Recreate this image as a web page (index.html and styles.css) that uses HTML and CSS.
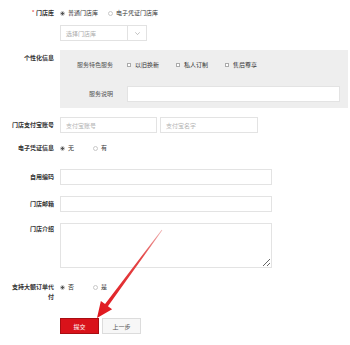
FILE: index.html
```html
<!DOCTYPE html>
<html lang="zh-CN">
<head>
<meta charset="utf-8">
<title>门店信息</title>
<link rel="stylesheet" href="styles.css">
</head>
<body>
<div class="form">
  <div class="row r1">
    <div class="label"><span class="req">*</span> 门店库</div>
    <div class="opts">
      <span class="opt"><span class="radio on"></span>普通门店库</span>
      <span class="opt"><span class="radio"></span>电子凭证门店库</span>
    </div>
  </div>
  <div class="row r2">
    <div></div>
    <div class="select">
      <span class="ph">选择门店库</span>
      <span class="caret"><svg width="5" height="3" viewBox="0 0 5 3"><polyline points="0.3,0.3 2.5,2.6 4.7,0.3" fill="none" stroke="#9a9a9a" stroke-width="0.6"/></svg></span>
    </div>
  </div>
  <div class="row r3 top">
    <div class="label lp3">个性化信息</div>
    <div class="panel">
      <div class="plabel">服务特色服务</div>
      <div class="checks">
        <span class="chk"><span class="box"></span>以旧换新</span>
        <span class="chk"><span class="box"></span>私人订制</span>
        <span class="chk"><span class="box"></span>售后尊享</span>
      </div>
      <div class="plabel">服务说明</div>
      <input class="inp full" type="text">
    </div>
  </div>
  <div class="row r4">
    <div class="label">门店支付宝账号</div>
    <div class="pair">
      <input class="inp w97" type="text" placeholder="支付宝账号">
      <input class="inp w98" type="text" placeholder="支付宝名字">
    </div>
  </div>
  <div class="row r5">
    <div class="label">电子凭证信息</div>
    <div class="opts">
      <span class="opt"><span class="radio on"></span>无</span>
      <span class="opt"><span class="radio"></span>有</span>
    </div>
  </div>
  <div class="row r6">
    <div class="label">自用编码</div>
    <div><input class="inp w212" type="text"></div>
  </div>
  <div class="row r7">
    <div class="label">门店邮箱</div>
    <div><input class="inp w212" type="text"></div>
  </div>
  <div class="row r8 top">
    <div class="label lp1">门店介绍</div>
    <div><textarea class="area"></textarea></div>
  </div>
  <div class="row r9 top">
    <div class="label">支持大额订单代付</div>
    <div class="opts">
      <span class="opt"><span class="radio on"></span>否</span>
      <span class="opt"><span class="radio"></span>是</span>
    </div>
  </div>
  <div class="row r10">
    <div></div>
    <div class="btns">
      <button class="btn primary" type="button">提交</button>
      <button class="btn sec" type="button">上一步</button>
    </div>
  </div>
</div>
<svg class="pointer" width="350" height="345" viewBox="0 0 350 345">
  <defs>
    <linearGradient id="ag" gradientUnits="userSpaceOnUse" x1="162" y1="230" x2="97" y2="318">
      <stop offset="0" stop-color="#efb4b4"/>
      <stop offset="0.3" stop-color="#e44848"/>
      <stop offset="1" stop-color="#e0141b"/>
    </linearGradient>
  </defs>
  <polygon fill="url(#ag)" points="162.3,230.2 107.95,306.21 112.13,309.30 97,318 100.87,300.98 105.05,304.07 161.7,229.8"/>
</svg>
</body>
</html>
```

FILE: styles.css
```css
* { box-sizing: border-box; }

body {
  margin: 0;
  width: 350px;
  height: 345px;
  overflow: hidden;
  position: relative;
  background: #fff;
  font-family: "Noto Sans CJK SC", "Noto Sans", sans-serif;
  font-size: 6px;
  color: #333;
}

.form {
  display: flex;
  flex-direction: column;
  padding-left: 9px;
  padding-right: 2px;
}

.row {
  display: grid;
  grid-template-columns: 45px 1fr;
  column-gap: 6px;
  align-items: center;
}

.row.top { align-items: start; }

.label {
  text-align: right;
  font-weight: bold;
  line-height: 10px;
  color: #333;
}

.lp3 { padding-top: 3px; }
.lp1 { padding-top: 1px; }

.req { color: #e4393c; font-weight: normal; }

.r1 { margin-top: 8px; height: 10px; }
.r2 { margin-top: 7px; }
.r3 { margin-top: 9px; }
.r4 { margin-top: 9px; }
.r5 { margin-top: 10px; height: 10px; }
.r6 { margin-top: 16px; }
.r7 { margin-top: 11px; }
.r8 { margin-top: 11px; }
.r9 { margin-top: 14px; }
.r10 { margin-top: 16px; }

.opts {
  display: flex;
  align-items: center;
  gap: 10px;
  line-height: 10px;
  height: 10px;
}

.opt {
  display: flex;
  align-items: center;
  gap: 3px;
  min-width: 23px;
  color: #333;
}

.radio {
  flex: none;
  width: 5px;
  height: 5px;
  border-radius: 50%;
  border: 1px solid #c8c8c8;
  background: #fff;
}

.radio.on {
  border-color: #bdbdbd;
  background: radial-gradient(circle, #555 0 1.1px, #fff 1.6px);
}

.select {
  width: 87px;
  height: 16px;
  border: 1px solid #e2e2e2;
  display: flex;
  align-items: stretch;
  background: #fff;
}

.ph {
  flex: 1;
  padding-left: 5px;
  color: #ababab;
  display: flex;
  align-items: center;
}

.caret {
  width: 19px;
  border-left: 1px solid #e2e2e2;
  display: flex;
  align-items: center;
  justify-content: center;
}

.caret svg { display: block; }

.panel {
  background: #eeeeee;
  height: 58px;
  padding: 9px 8px 6px 0;
  display: grid;
  grid-template-columns: 53px 1fr;
  grid-template-rows: 12px 16px;
  column-gap: 14px;
  row-gap: 15px;
  align-items: center;
}

.plabel {
  text-align: right;
  color: #555;
  line-height: 10px;
}

.checks {
  display: flex;
  align-items: center;
  gap: 17px;
  line-height: 10px;
}

.chk {
  display: flex;
  align-items: center;
  gap: 4px;
  color: #333;
}

.box {
  flex: none;
  width: 4px;
  height: 4px;
  border: 1px solid #aaa;
  background: #fff;
}

.inp {
  display: block;
  height: 16px;
  margin: 0;
  padding: 0 5px;
  border: 1px solid #e3e3e3;
  background: #fff;
  font: inherit;
  font-size: 6px;
  color: #333;
  outline: none;
}

.inp::placeholder { color: #b3b3b3; }

.full { width: 100%; }

.pair { display: flex; gap: 3px; }
.w97 { width: 97px; }
.w98 { width: 98px; }
.w212 { width: 212px; }

.area {
  display: block;
  width: 212px;
  height: 45px;
  margin: 0;
  padding: 3px 5px;
  border: 1px solid #e3e3e3;
  background: #fff;
  font: inherit;
  font-size: 6px;
  outline: none;
}

.btns { display: flex; gap: 3px; }

.btn {
  width: 39px;
  height: 16px;
  margin: 0;
  padding: 0;
  border: 1px solid;
  font: inherit;
  font-size: 6px;
  display: flex;
  align-items: center;
  justify-content: center;
}

.btn.primary {
  background: #d9121a;
  border-color: #a80d12;
  color: #fff;
}

.btn.sec {
  background: #f7f7f7;
  border-color: #dcdcdc;
  color: #555;
}

.pointer {
  position: absolute;
  left: 0;
  top: 0;
  pointer-events: none;
}
```
